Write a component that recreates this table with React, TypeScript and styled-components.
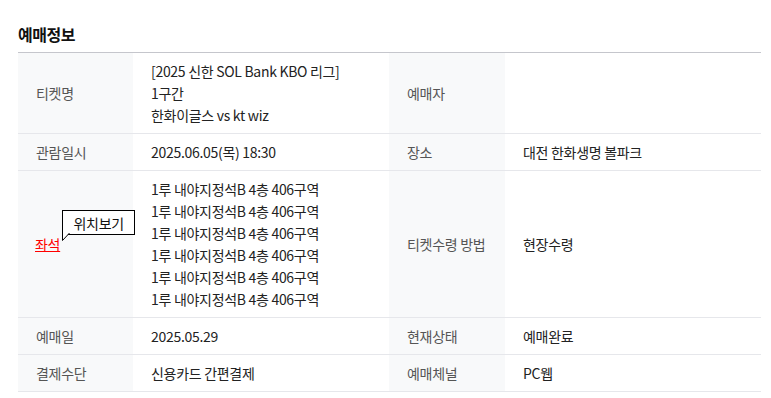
import React from "react";
import styled, { createGlobalStyle } from "styled-components";

const Global = createGlobalStyle`
  html, body { margin: 0; padding: 0; background: #fff; }
  body { font-family: "Noto Sans CJK KR", "Noto Sans", sans-serif; }
`;

const Page = styled.div`
  padding: 22px 10px 0 18px;
  width: 743px;
`;

const Title = styled.h2`
  margin: 0 0 6px 0;
  font-size: 16px;
  line-height: 24px;
  font-weight: 700;
  color: #111;
  letter-spacing: -0.5px;
`;

const Grid = styled.div`
  display: grid;
  grid-template-columns: 115px 256px 116px 256px;
  border-top: 1px solid #c5c6cc;
`;

const Cell = styled.div<{ $label?: boolean }>`
  display: flex;
  flex-direction: column;
  justify-content: center;
  padding: 7px 18px;
  border-bottom: 1px solid #e6e7eb;
  background: ${(p) => (p.$label ? "#f8f9fa" : "#fff")};
  color: ${(p) => (p.$label ? "#555" : "#222")};
  font-size: 14px;
  line-height: 22px;
  letter-spacing: -0.3px;
  white-space: nowrap;
`;

const SeatLink = styled.span`
  position: relative;
  display: inline-block;
  align-self: flex-start;
  color: #ff0000;
  text-decoration: underline;
  margin-left: -1px;
`;

const Tip = styled.span`
  position: absolute;
  left: calc(100% + 2px);
  bottom: 20px;
  display: flex;
  align-items: center;
  justify-content: center;
  width: 71px;
  height: 23px;
  border: 1px solid #000;
  background: #fff;
  color: #111;
  font-size: 14px;
  text-decoration: none;
  z-index: 2;
`;

const TipTail = styled.svg`
  position: absolute;
  left: -1px;
  bottom: -7px;
  width: 8px;
  height: 8px;
  overflow: visible;
`;

const rows: Array<[React.ReactNode, React.ReactNode, string, string]> = [];

const seatLines = Array.from({ length: 6 }, () => "1루 내야지정석B 4층 406구역");

export default function App() {
  return (
    <>
      <Global />
      <Page>
        <Title>예매정보</Title>
        <Grid>
          <Cell $label>티켓명</Cell>
          <Cell>
            <div>[2025 신한 SOL Bank KBO 리그]</div>
            <div>1구간</div>
            <div>한화이글스 vs kt wiz</div>
          </Cell>
          <Cell $label>예매자</Cell>
          <Cell></Cell>

          <Cell $label>관람일시</Cell>
          <Cell>2025.06.05(목) 18:30</Cell>
          <Cell $label>장소</Cell>
          <Cell>대전 한화생명 볼파크</Cell>

          <Cell $label>
            <SeatLink>
              좌석
              <Tip>
                위치보기
                <TipTail viewBox="0 0 8 8">
                  <polygon points="0.5,0 0.5,7.5 7.5,0" fill="#fff" />
                  <polyline points="0.5,0 0.5,7.5 7.5,0" fill="none" stroke="#000" strokeWidth="1" />
                </TipTail>
              </Tip>
            </SeatLink>
          </Cell>
          <Cell>
            {seatLines.map((s, i) => (
              <div key={i}>{s}</div>
            ))}
          </Cell>
          <Cell $label>티켓수령 방법</Cell>
          <Cell>현장수령</Cell>

          <Cell $label>예매일</Cell>
          <Cell>2025.05.29</Cell>
          <Cell $label>현재상태</Cell>
          <Cell>예매완료</Cell>

          <Cell $label>결제수단</Cell>
          <Cell>신용카드 간편결제</Cell>
          <Cell $label>예매체널</Cell>
          <Cell>PC웹</Cell>
        </Grid>
      </Page>
    </>
  );
}
